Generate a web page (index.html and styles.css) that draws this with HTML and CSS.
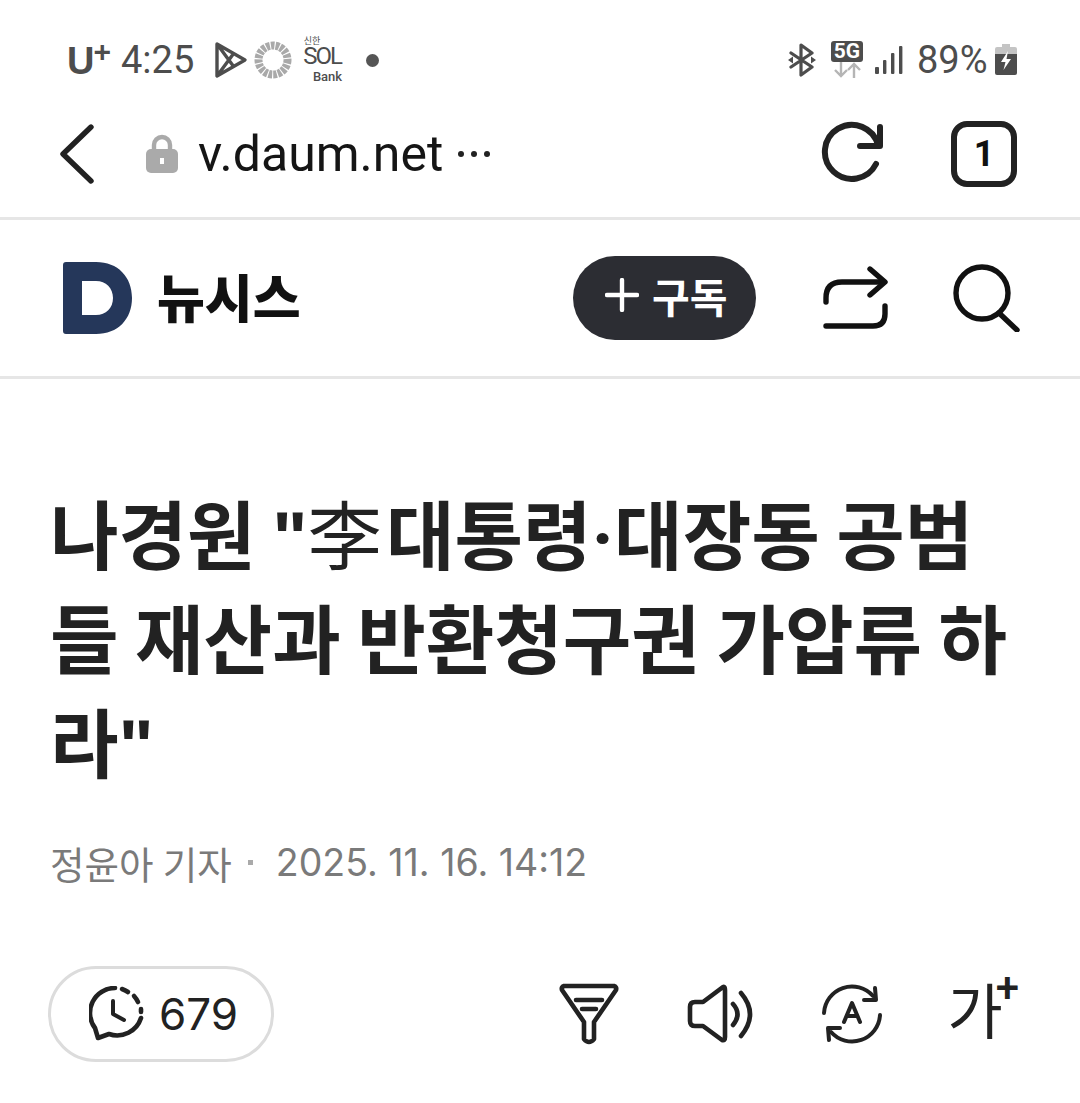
FILE: index.html
```html
<!DOCTYPE html>
<html lang="ko">
<head>
    <meta charset="UTF-8">
    <title>뉴시스 - 다음 뉴스</title>
    <link rel="stylesheet" href="styles.css">
</head>
<body>
<div class="status-bar">
    <div class="status-left">
        <span class="carrier">U<sup>+</sup></span>
        <span class="clock">4:25</span>
        <svg class="ic-play" width="34" height="38" viewBox="0 0 34 38" fill="none" stroke="#4d4d4d" stroke-width="3.4" stroke-linejoin="round">
            <path d="M3 3 L31 19 L3 35 Z M3 3 L20 26 M3 35 L20 12"/>
        </svg>
        <svg class="ic-sun" width="38" height="38" viewBox="0 0 38 38" fill="none">
            <circle cx="19" cy="19" r="14.5" stroke="#a9a9a9" stroke-width="8" stroke-dasharray="3.6 1.1"/>
        </svg>
        <span class="sol">
            <span class="sol-top">신한</span>
            <span class="sol-mid">SOL</span>
            <span class="sol-bot">Bank</span>
        </span>
        <span class="notif-dot"></span>
    </div>
    <div class="status-right">
        <svg width="30" height="34" viewBox="0 0 30 34" fill="none" stroke="#4d4d4d" stroke-width="3.2" stroke-linejoin="round" stroke-linecap="round">
            <path d="M4 10 L25 24 L14 32 V2 L25 10 L4 24"/>
            <path d="M1 17 L6 13.5 V20.5 Z M29 17 L24 13.5 V20.5 Z" fill="#4d4d4d" stroke="none"/>
        </svg>
        <div class="net">
            <span class="net-5g">5G</span>
            <svg width="32" height="16" viewBox="0 0 32 16" fill="none" stroke="#b5b5b5" stroke-width="2.4">
                <path d="M10 0 V14 M4 8 L10 14 L16 8 M23 16 V2 M17 8 L23 2 L29 8"/>
            </svg>
        </div>
        <svg class="ic-signal" width="28" height="30" viewBox="0 0 28 30" fill="#4d4d4d">
            <rect x="0" y="22" width="4" height="7" rx="1"/>
            <rect x="8" y="15" width="3.4" height="14" rx="1"/>
            <rect x="16" y="8" width="3.4" height="21" rx="1"/>
            <rect x="24" y="1" width="3.4" height="28" rx="1"/>
        </svg>
        <span class="battery-text">89%</span>
        <svg width="22" height="32" viewBox="0 0 22 32">
            <path d="M7 0 H15 V3 H20 Q22 3 22 5 V10 H0 V5 Q0 3 2 3 H7 Z" fill="#c4c4c4"/>
            <path d="M0 10 H22 V29 Q22 31 20 31 H2 Q0 31 0 29 Z" fill="#4d4d4d"/>
            <path d="M13 7 L6 18 H10.5 L8.5 26 L16 15 H11.5 Z" fill="#fff"/>
        </svg>
    </div>
</div>

<div class="toolbar">
    <svg class="ic-back" width="34" height="60" viewBox="0 0 34 60" fill="none" stroke="#222" stroke-width="5.4" stroke-linecap="round" stroke-linejoin="round">
        <path d="M31 3 L3 30 L31 57"/>
    </svg>
    <svg class="ic-lock" width="32" height="40" viewBox="0 0 32 40">
        <path d="M8 17 V11 A8 8 0 0 1 24 11 V17" fill="none" stroke="#aaa" stroke-width="4.4"/>
        <rect x="0" y="15" width="32" height="24" rx="5" fill="#aaa"/>
        <rect x="14" y="24" width="4" height="6" fill="#fff"/>
    </svg>
    <span class="url">v.daum.net</span>
    <span class="url-more">
        <i></i><i></i><i></i>
    </span>
    <svg class="ic-reload" width="64" height="66" viewBox="0 0 64 66" fill="none" stroke="#222" stroke-width="6" stroke-linecap="round" stroke-linejoin="round">
        <path d="M55 43 A27 27 0 1 1 57 24"/>
        <path d="M59 6 V25 H39"/>
    </svg>
    <span class="tab-count">1</span>
</div>

<header class="press-bar">
    <svg class="press-logo" width="70" height="72" viewBox="0 0 70 72">
        <path fill-rule="evenodd" fill="#25375a" d="M3 0 H33 C55 0 69 15 69 36 C69 57 55 72 33 72 H3 Q0 72 0 69 V3 Q0 0 3 0 Z M19 19 V53 H33 C43 53 50 46 50 36 C50 26 43 19 33 19 Z"/>
    </svg>
    <span class="press-name">뉴시스</span>
    <button class="subscribe">
        <svg width="34" height="34" viewBox="0 0 34 34" stroke="#fff" stroke-width="4.4" stroke-linecap="round">
            <path d="M17 2 V32 M2 17 H32"/>
        </svg>
        <span>구독</span>
    </button>
    <svg class="ic-share" width="66" height="64" viewBox="0 0 66 64" fill="none" stroke="#111" stroke-width="5.4" stroke-linecap="round" stroke-linejoin="round">
        <path d="M3 36 V32 Q3 16 19 16 H60"/>
        <path d="M47 3 L62 16 L47 29"/>
        <path d="M62 40 V48 Q62 60 50 60 H3"/>
    </svg>
    <svg class="ic-search" width="68" height="68" viewBox="0 0 68 68" fill="none" stroke="#111" stroke-width="5.4" stroke-linecap="round">
        <circle cx="30" cy="29" r="26"/>
        <path d="M47 49 L65 66"/>
    </svg>
</header>

<main class="article">
    <h1 class="headline">나경원 <span class="quote">"</span><span class="hanja">李</span>대통령·대장동 공범들 재산과 반환청구권 가압류 하라<span class="quote">"</span></h1>
    <div class="byline">
        <span class="reporter">정윤아 기자</span>
        <span class="sep"></span>
        <span class="date">2025. 11. 16. 14:12</span>
    </div>
    <div class="actions">
        <div class="comment-pill">
            <svg width="56" height="56" viewBox="0 0 56 56" fill="none" stroke="#222" stroke-width="4.6" stroke-linecap="round" stroke-linejoin="round">
                <path d="M26 2 A25 25 0 0 0 6 42 L9 52 L20 48 A25 25 0 0 0 52 32"/>
                <path d="M33 3 A25 25 0 0 1 39 6 M45 10 A25 25 0 0 1 49 16 M52 23 V26" />
                <path d="M24 15 V28 L35 34" stroke-width="4"/>
            </svg>
            <span class="comment-count">679</span>
        </div>
        <div class="tools">
            <svg width="60" height="62" viewBox="0 0 60 62" fill="none" stroke="#222" stroke-width="4.6" stroke-linecap="round" stroke-linejoin="round">
                <path d="M5 3 H55 Q58 4 57 7 L35 39 V56 Q30 62 25 56 V39 L3 7 Q2 4 5 3 Z"/>
                <path d="M17 17 H43 M23 26 H37"/>
            </svg>
            <svg width="66" height="60" viewBox="0 0 66 60" fill="none" stroke="#222" stroke-width="4.6" stroke-linecap="round" stroke-linejoin="round">
                <path d="M36 3 Q38 2 38 6 V53 Q38 57 35 56 L16 42 H8 Q3 42 3 37 V23 Q3 18 8 18 H16 Z"/>
                <path d="M46 20 Q55 30 46 41 M54 9 Q72 30 54 52"/>
            </svg>
            <svg width="62" height="62" viewBox="0 0 62 62" fill="none" stroke="#222" stroke-width="4" stroke-linecap="round" stroke-linejoin="round">
                <path d="M3 30 A28 28 0 0 1 52 13"/>
                <path d="M54 5 L55 17 L43 17"/>
                <path d="M59 32 A28 28 0 0 1 10 49"/>
                <path d="M8 57 L7 45 L19 45"/>
                <path d="M23 39 L31 20 L39 39 M26 33 H36" stroke-width="4"/>
            </svg>
            <span class="font-size">가<sup>+</sup></span>
        </div>
    </div>
</main>
</body>
</html>
```

FILE: styles.css
```css
* {
    box-sizing: border-box;
}

body {
    margin: 0;
    background: #fff;
    color: #222;
    font-family: Roboto, "Noto Sans CJK KR", sans-serif;
}

sup {
    line-height: 0;
}

.status-bar {
    height: 76px;
    margin-top: 22px;
    padding: 0 63px 0 67px;
    display: flex;
    justify-content: space-between;
    align-items: center;
    color: #4d4d4d;
}

.status-left,
.status-right {
    display: flex;
    align-items: center;
}

.carrier {
    font-family: "Liberation Sans", sans-serif;
    font-size: 38px;
    font-weight: bold;
    width: 54px;
    margin-top: 2px;
}

.carrier sup {
    font-size: 30px;
    vertical-align: 12px;
    margin-left: -1px;
}

.clock {
    font-size: 38px;
    width: 93px;
}

.ic-sun {
    margin-left: 6px;
}

.sol {
    width: 44px;
    margin-left: 6px;
    display: flex;
    flex-direction: column;
    align-items: center;
    line-height: 1;
}

.sol-top {
    font-size: 9px;
    margin-right: 16px;
}

.sol-mid {
    font-size: 24px;
    letter-spacing: -2px;
    line-height: 21px;
    margin-right: -4px;
}

.sol-bot {
    font-size: 13px;
    font-weight: 500;
    margin-left: 15px;
    margin-top: 3px;
}

.notif-dot {
    width: 13px;
    height: 13px;
    border-radius: 50%;
    background: #555;
    margin-left: 24px;
}

.net {
    display: flex;
    flex-direction: column;
    align-items: center;
    width: 32px;
    margin-left: 14px;
    margin-top: -2px;
}

.net-5g {
    width: 32px;
    height: 21px;
    border-radius: 3px;
    background: #4d4d4d;
    color: #fff;
    font-size: 21px;
    font-weight: bold;
    line-height: 21px;
    text-align: center;
}

.ic-signal {
    margin-left: 12px;
}

.battery-text {
    font-size: 38px;
    margin-left: 14px;
    width: 78px;
}

.toolbar {
    height: 122px;
    padding: 0 63px 8px 60px;
    display: flex;
    align-items: center;
    border-bottom: 3px solid #e6e6e6;
}

.ic-lock {
    margin-left: 52px;
}

.url {
    font-size: 50px;
    color: #151515;
    margin-left: 20px;
}

.url-more {
    display: flex;
    gap: 7px;
    margin-left: 15px;
}

.url-more i {
    width: 6px;
    height: 6px;
    border-radius: 50%;
    background: #222;
}

.ic-reload {
    margin-left: auto;
}

.tab-count {
    width: 66px;
    height: 66px;
    margin-left: 66px;
    border: 6px solid #222;
    border-radius: 16px;
    font-size: 36px;
    font-weight: bold;
    color: #111;
    display: flex;
    justify-content: center;
    align-items: center;
}

.press-bar {
    height: 159px;
    padding: 0 60px 0 63px;
    display: flex;
    align-items: center;
    border-bottom: 3px solid #e6e6e6;
}

.press-name {
    font-size: 52px;
    font-weight: 900;
    color: #111;
    margin-left: 24px;
    margin-top: -6px;
}

.subscribe {
    width: 183px;
    height: 84px;
    margin-left: auto;
    border: none;
    border-radius: 42px;
    background: #2c2d33;
    color: #fff;
    font: bold 41px Roboto, "Noto Sans CJK KR", sans-serif;
    display: flex;
    align-items: center;
    gap: 13px;
    padding: 0 0 6px 32px;
}

.ic-share {
    margin-left: 67px;
}

.ic-search {
    margin-left: 63px;
}

.article {
    padding: 108px 50px 0 50px;
}

.headline {
    margin: 0;
    font-size: 74.5px;
    line-height: 104px;
    font-weight: bold;
    word-spacing: -2px;
    color: #222;
}

.quote {
    font-family: "Liberation Sans", sans-serif;
}

.hanja {
    font-weight: 400;
    margin-right: 4px;
}

.byline {
    margin-top: 36px;
    display: flex;
    align-items: center;
    font-size: 37.5px;
    color: #7a7a7a;
}

.date {
    font-family: Inter, sans-serif;
    font-size: 37.5px;
}

.sep {
    width: 5px;
    height: 5px;
    background: #aaa;
    margin: 0 23px 0 16px;
}

.actions {
    margin-top: 76px;
    display: flex;
    align-items: center;
    justify-content: space-between;
    padding-right: 11px;
}

.comment-pill {
    width: 226px;
    height: 96px;
    margin-left: -2px;
    padding-left: 38px;
    border: 3px solid #dcdcdc;
    border-radius: 48px;
    display: flex;
    align-items: center;
    gap: 14px;
}

.comment-count {
    font-family: Inter, sans-serif;
    font-size: 44px;
    color: #222;
}

.tools {
    display: flex;
    align-items: center;
    gap: 68px;
}

.font-size {
    font-size: 60px;
    font-weight: 400;
    line-height: 1;
    margin-left: -4px;
}

.font-size sup {
    font-size: 42px;
    font-weight: 500;
    margin-left: -7px;
    vertical-align: 32px;
}
```
